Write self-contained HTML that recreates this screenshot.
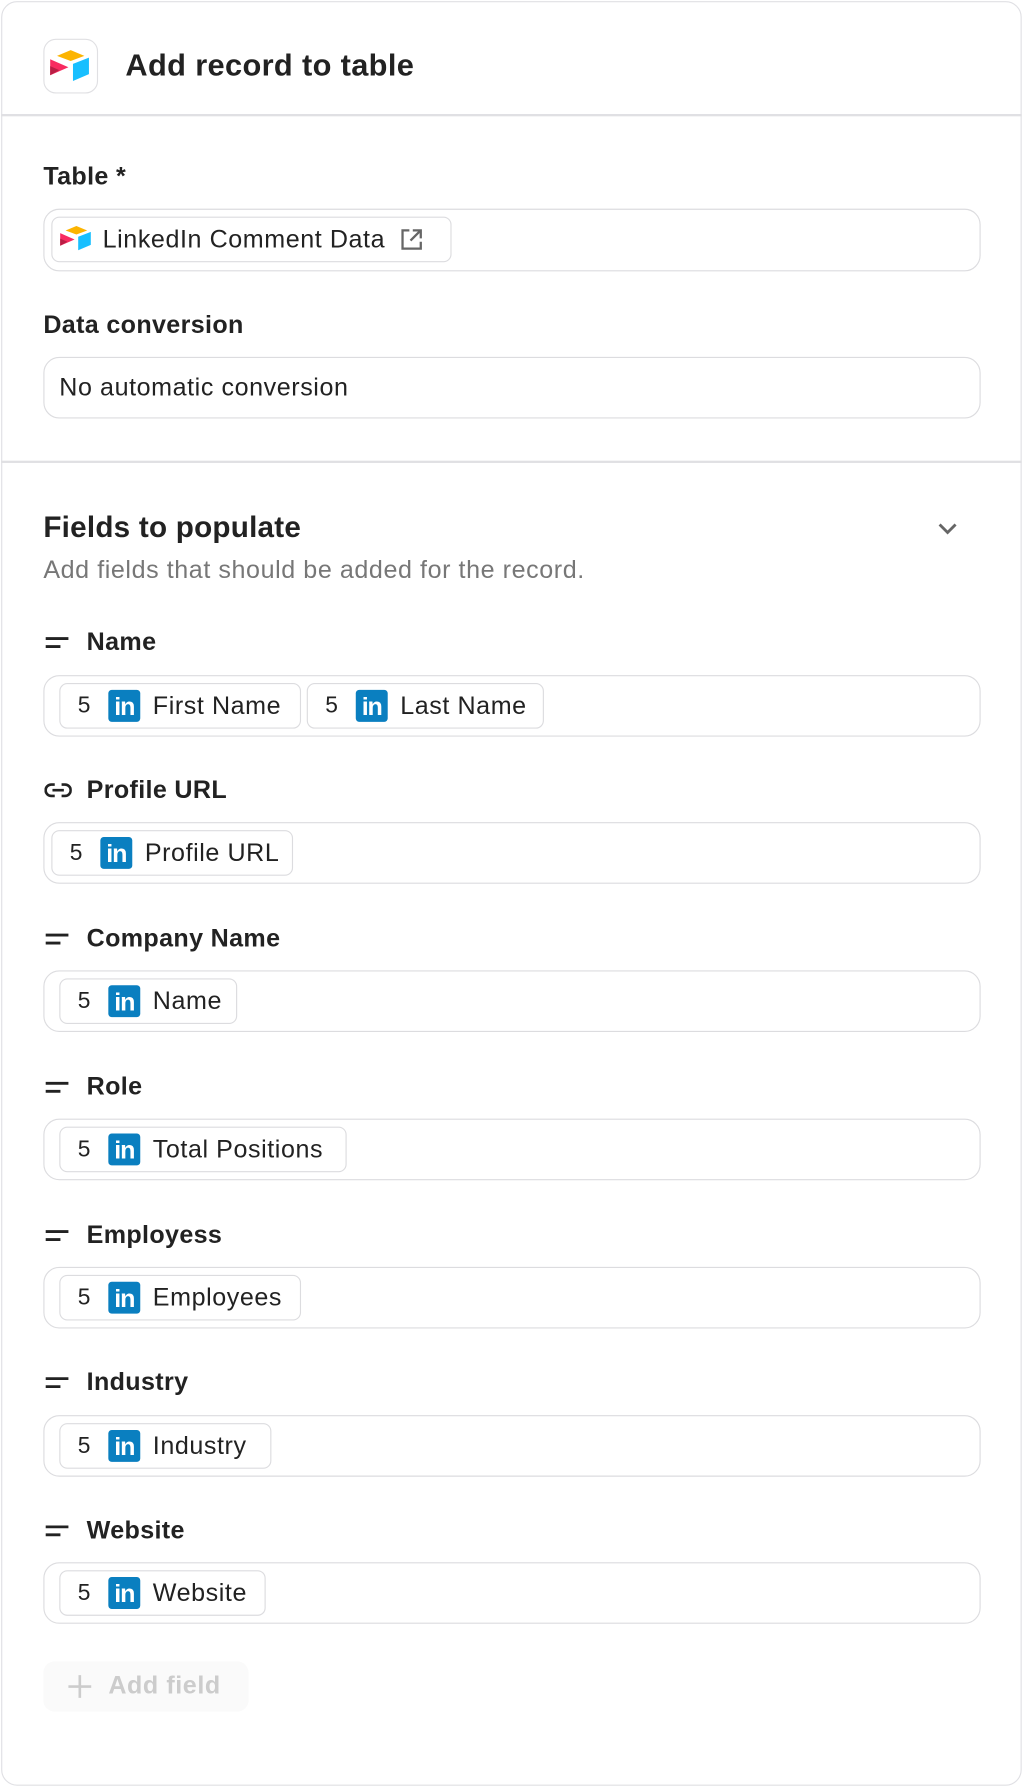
<!DOCTYPE html>
<html><head><meta charset="utf-8"><style>
html,body{margin:0;padding:0;background:#fff;width:1024px;height:1788px;overflow:hidden}
#w{position:absolute;left:0;top:0;width:898px;height:1568px;transform:scale(1.14031);transform-origin:0 0;font-family:"Liberation Sans",sans-serif;color:#222;letter-spacing:0.5px}
.card{position:absolute;left:1px;top:1px;width:895px;height:1565px;border:1.5px solid #e0e0e4;border-radius:14px;box-sizing:border-box}
.abs{position:absolute}
.hr{position:absolute;left:1px;width:895px;height:1.5px;background:#e0e0e3}
.lbl{position:absolute;left:38px;font-size:22px;font-weight:bold;color:#222;line-height:26px;letter-spacing:0.3px}
.box{position:absolute;left:38px;width:822px;height:54px;border:1.5px solid #dcdcdf;border-radius:14px;box-sizing:border-box}
.chip{position:absolute;top:6px;height:40px;border:1.5px solid #dcdcdf;border-radius:7px;box-sizing:border-box;display:flex;align-items:center;font-size:22px;white-space:nowrap;padding-right:8px}
.chip .n{width:42px;text-align:center;font-size:20px}
.li{width:28px;height:28px;background:#0a7fc0;border-radius:3px;color:#fff;font-weight:bold;font-size:22px;line-height:30px;text-align:center;margin-right:11px;letter-spacing:-1px;overflow:hidden}
.fi{position:absolute;left:40px;width:21px}
</style></head><body><div id="w">
<div class="card"></div>
<div class="abs" style="left:38px;top:34px;width:48px;height:48px;border:1.5px solid #e0e0e3;border-radius:11px;box-sizing:border-box"></div>
<svg class="abs" style="left:43px;top:42px" width="38" height="34" viewBox="0 0 38 32"><path d="M7 6 L19 1 L31 6 L19 10.5Z" fill="#fcb400"/><path d="M21 13 L35 7.5 V22 L21 28Z" fill="#18bfff"/><path d="M1 9 L17 16 L1 23Z" fill="#f82b60"/><path d="M1 15 L9 18.5 L1 23Z" fill="#ba1e45"/></svg>
<div class="abs" style="left:110px;top:42px;font-size:27px;font-weight:bold;color:#222;letter-spacing:0.3px">Add record to table</div>
<div class="hr" style="top:100px"></div>
<div class="lbl" style="top:142px">Table *</div>
<div class="box" style="top:183px;height:55px">
 <div class="chip" style="left:6px;width:351px;padding-left:6px">
  <svg width="30" height="28" viewBox="0 0 38 32" style="margin-right:8px"><path d="M7 6 L19 1 L31 6 L19 10.5Z" fill="#fcb400"/><path d="M21 13 L35 7.5 V22 L21 28Z" fill="#18bfff"/><path d="M1 9 L17 16 L1 23Z" fill="#f82b60"/><path d="M1 15 L9 18.5 L1 23Z" fill="#ba1e45"/></svg>
  <span>LinkedIn Comment Data</span>
  <svg width="22" height="22" viewBox="0 0 22 22" style="margin-left:12px" fill="none" stroke="#666" stroke-width="2"><path d="M9 3H3V19H19V13"/><path d="M12 3H19V10M19 3L10 12"/></svg>
 </div>
</div>
<div class="lbl" style="top:272px">Data conversion</div>
<div class="box" style="top:313px"><div class="abs" style="left:13px;top:13px;font-size:22px">No automatic conversion</div></div>
<div class="hr" style="top:404px"></div>
<div class="abs" style="left:38px;top:447px;font-size:26px;font-weight:bold;letter-spacing:0.2px">Fields to populate</div>
<svg class="abs" style="left:821px;top:457px" width="20" height="14" viewBox="0 0 20 14"><path d="M3 3L10 10L17 3" fill="none" stroke="#666" stroke-width="2.5"/></svg>
<div class="abs" style="left:38px;top:487px;font-size:22px;color:#777">Add fields that should be added for the record.</div>

<svg class="fi" style="top:558px" height="12"><path d="M0 2H20M0 9H13" stroke="#222" stroke-width="2.5"/></svg>
<div class="lbl" style="left:76px;top:550px">Name</div>
<div class="box" style="top:592px">
 <div class="chip" style="left:13px;width:212px"><span class="n">5</span><span class="li">in</span>First Name</div>
 <div class="chip" style="left:230px;width:208px"><span class="n">5</span><span class="li">in</span>Last Name</div>
</div>

<svg class="abs" style="left:39px;top:685px" width="24" height="16" viewBox="0 0 24 16" fill="none" stroke="#222" stroke-width="2.3"><path d="M9 3H6a5 5 0 0 0 0 10h3M15 3h3a5 5 0 0 1 0 10h-3M7 8h10"/></svg>
<div class="lbl" style="left:76px;top:680px">Profile URL</div>
<div class="box" style="top:721px">
 <div class="chip" style="left:6px;width:212px"><span class="n">5</span><span class="li">in</span>Profile URL</div>
</div>

<svg class="fi" style="top:818px" height="12"><path d="M0 2H20M0 9H13" stroke="#222" stroke-width="2.5"/></svg>
<div class="lbl" style="left:76px;top:810px">Company Name</div>
<div class="box" style="top:851px">
 <div class="chip" style="left:13px;width:156px"><span class="n">5</span><span class="li">in</span>Name</div>
</div>

<svg class="fi" style="top:948px" height="12"><path d="M0 2H20M0 9H13" stroke="#222" stroke-width="2.5"/></svg>
<div class="lbl" style="left:76px;top:940px">Role</div>
<div class="box" style="top:981px">
 <div class="chip" style="left:13px;width:252px"><span class="n">5</span><span class="li">in</span>Total Positions</div>
</div>

<svg class="fi" style="top:1078px" height="12"><path d="M0 2H20M0 9H13" stroke="#222" stroke-width="2.5"/></svg>
<div class="lbl" style="left:76px;top:1070px">Employess</div>
<div class="box" style="top:1111px">
 <div class="chip" style="left:13px;width:212px"><span class="n">5</span><span class="li">in</span>Employees</div>
</div>

<svg class="fi" style="top:1207px" height="12"><path d="M0 2H20M0 9H13" stroke="#222" stroke-width="2.5"/></svg>
<div class="lbl" style="left:76px;top:1199px">Industry</div>
<div class="box" style="top:1241px">
 <div class="chip" style="left:13px;width:186px"><span class="n">5</span><span class="li">in</span>Industry</div>
</div>

<svg class="fi" style="top:1337px" height="12"><path d="M0 2H20M0 9H13" stroke="#222" stroke-width="2.5"/></svg>
<div class="lbl" style="left:76px;top:1329px">Website</div>
<div class="box" style="top:1370px">
 <div class="chip" style="left:13px;width:181px"><span class="n">5</span><span class="li">in</span>Website</div>
</div>

<div class="abs" style="left:38px;top:1457px;width:180px;height:44px;background:#fafafa;border-radius:10px"></div>
<svg class="abs" style="left:59px;top:1468px" width="22" height="22"><path d="M11 1V21M1 11H21" stroke="#ccc" stroke-width="2.3"/></svg>
<div class="abs" style="left:95px;top:1465px;font-size:22px;font-weight:bold;color:#ccc">Add field</div>
</div></body></html>
